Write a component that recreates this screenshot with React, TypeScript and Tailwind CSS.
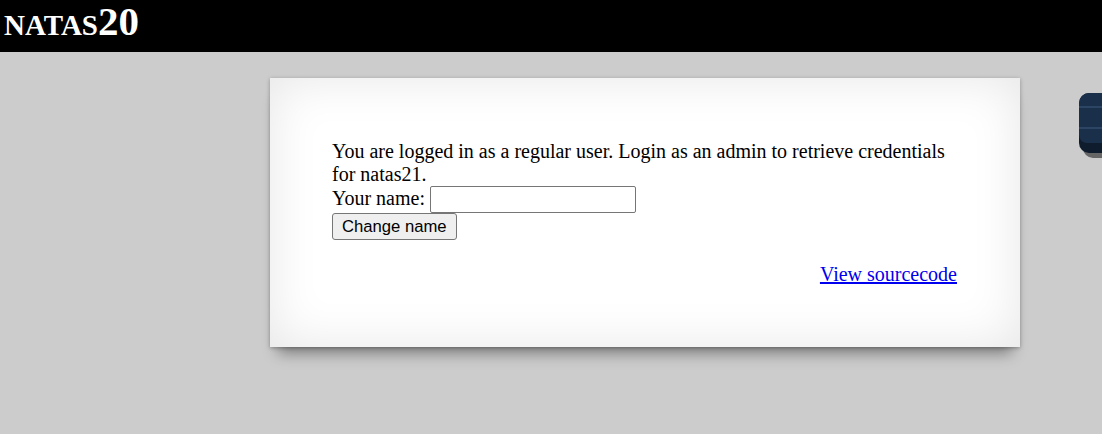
const App = () => {
  return (
    <div className="relative min-h-[434px] w-full overflow-hidden bg-[#cccccc] font-['Liberation_Serif',serif]">
      <h1 className="h-[52px] bg-black pl-[4px] text-[41px] font-bold leading-[42px] text-white [font-variant:small-caps]">
        natas20
      </h1>

      <div className="ml-[270px] mt-[26px] w-[750px] bg-white pl-[62px] pr-[63px] pt-[62px] pb-[61px] text-[20px] leading-[23px] text-black shadow-[0_1px_4px_rgba(0,0,0,0.3),0_14px_14px_-8px_rgba(0,0,0,0.4),inset_0_0_50px_rgba(0,0,0,0.1)]">
        <div>
          You are logged in as a regular user. Login as an admin to retrieve credentials for natas21.
          <br />
          <form onSubmit={(e) => e.preventDefault()}>
            Your name:{' '}
            <input
              name="name"
              className="inline-block h-[27px] w-[206px] rounded-[2px] border border-[#767676] bg-white px-[2px] align-baseline font-['Liberation_Sans',Arial,sans-serif] text-[16.67px]"
            />
            <br />
            <button
              type="submit"
              className="h-[27px] rounded-[3px] border border-[#767676] bg-[#efefef] px-[9px] font-['Liberation_Sans',Arial,sans-serif] text-[16.67px] leading-[20px] text-black"
            >
              Change name
            </button>
          </form>
        </div>
        <div className="mt-[23px] text-right">
          <a href="#" className="text-[#0000ee] underline">
            View sourcecode
          </a>
        </div>
      </div>

      {/* wechall widget at the right edge */}
      <div className="absolute left-[1083px] top-[97px] h-[61px] w-[40px] rounded-[10px] bg-[#666666]" />
      <div className="absolute left-[1079px] top-[93px] h-[60px] w-[40px] overflow-hidden rounded-[10px] bg-[#0e1c2e]">
        <div className="h-[50px] rounded-b-[8px] bg-[#1a2f4a]">
          <div className="h-[13px]" />
          <div className="h-[2px] bg-[#2c4564]" />
          <div className="h-[19px]" />
          <div className="h-[2px] bg-[#2c4564]" />
        </div>
      </div>
    </div>
  )
}

export default App
